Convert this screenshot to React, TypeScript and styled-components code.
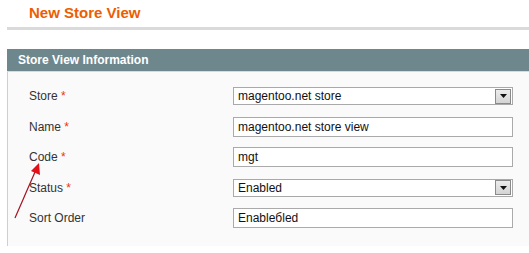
import React from "react";
import styled, { createGlobalStyle } from "styled-components";

const GlobalStyle = createGlobalStyle`
  html, body {
    margin: 0;
    padding: 0;
    background: #fff;
    font-family: "Liberation Sans", Arial, sans-serif;
  }
`;

type Field = {
  label: string;
  required?: boolean;
  kind: "select" | "text";
  value: string;
};

const fields: Field[] = [
  { label: "Store", required: true, kind: "select", value: "magentoo.net store" },
  { label: "Name", required: true, kind: "text", value: "magentoo.net store view" },
  { label: "Code", required: true, kind: "text", value: "mgt" },
  { label: "Status", required: true, kind: "select", value: "Enabled" },
  { label: "Sort Order", kind: "text", value: "Enableбled" },
];

const App = () => {
  return (
    <Page>
      <GlobalStyle />
      <TitleBar>
        <Title>New Store View</Title>
      </TitleBar>
      <Section>
        <SectionHead>Store View Information</SectionHead>
        <SectionBody>
          {fields.map((f) => (
            <Row key={f.label}>
              <Label>
                {f.label}
                {f.required && <Req> *</Req>}
              </Label>
              {f.kind === "select" ? (
                <Select>
                  <span>{f.value}</span>
                  <DropButton>
                    <svg width="7" height="4" viewBox="0 0 7 4">
                      <path d="M0 0h7L3.5 4z" fill="#111" />
                    </svg>
                  </DropButton>
                </Select>
              ) : (
                <TextInput readOnly defaultValue={f.value} />
              )}
            </Row>
          ))}
        </SectionBody>
      </Section>
      <Annotation width="40" height="70" viewBox="0 0 40 70">
        <line x1="15" y1="60" x2="35" y2="14" stroke="#a3121e" strokeWidth="1.2" />
        <path d="M39 5 L40 17 L31 13 Z" fill="#e3101a" />
      </Annotation>
    </Page>
  );
};

const Page = styled.div`
  position: relative;
  width: 529px;
  height: 253px;
  padding-left: 7px;
  box-sizing: border-box;
  overflow: hidden;
`;

const TitleBar = styled.div`
  height: 27px;
  padding-left: 22px;
  border-bottom: 3px solid #dadada;
  box-sizing: content-box;
`;

const Title = styled.h3`
  margin: 0;
  padding-top: 4px;
  font-size: 15px;
  line-height: 17px;
  font-weight: bold;
  color: #eb5e00;
`;

const Section = styled.div`
  margin-top: 19px;
`;

const SectionHead = styled.div`
  height: 22px;
  line-height: 22px;
  padding-left: 11px;
  background: #6e878d;
  color: #fff;
  font-size: 12px;
  font-weight: bold;
  border-bottom: 1px solid #d2dde0;
`;

const SectionBody = styled.div`
  background: #fafafa;
  border-left: 1px solid #cfcfcf;
  padding: 9px 0 12px 21px;
`;

const Row = styled.div`
  display: flex;
  align-items: center;
  height: 30.5px;
`;

const Label = styled.div`
  width: 204px;
  font-size: 12px;
  color: #333;
`;

const Req = styled.span`
  color: #eb340a;
`;

const Select = styled.div`
  box-sizing: border-box;
  width: 280px;
  height: 18px;
  border: 1px solid #a9a9a9;
  background: #fff;
  display: flex;
  align-items: center;
  justify-content: space-between;
  padding: 0 1px 0 4px;
  font-size: 12px;
  color: #111;
`;

const DropButton = styled.span`
  box-sizing: border-box;
  width: 16px;
  height: 15px;
  border: 1px solid #8a8a8a;
  background: linear-gradient(#ececec, #d4d4d4);
  display: flex;
  align-items: center;
  justify-content: center;
`;

const TextInput = styled.input`
  box-sizing: border-box;
  width: 280px;
  height: 20px;
  margin: 0;
  border: 1px solid #aaa;
  background: #fff;
  padding: 0 4px;
  font-family: "Liberation Sans", Arial, sans-serif;
  font-size: 12px;
  color: #111;
  outline: none;
`;

const Annotation = styled.svg`
  position: absolute;
  left: 0;
  top: 158px;
`;

export default App;
